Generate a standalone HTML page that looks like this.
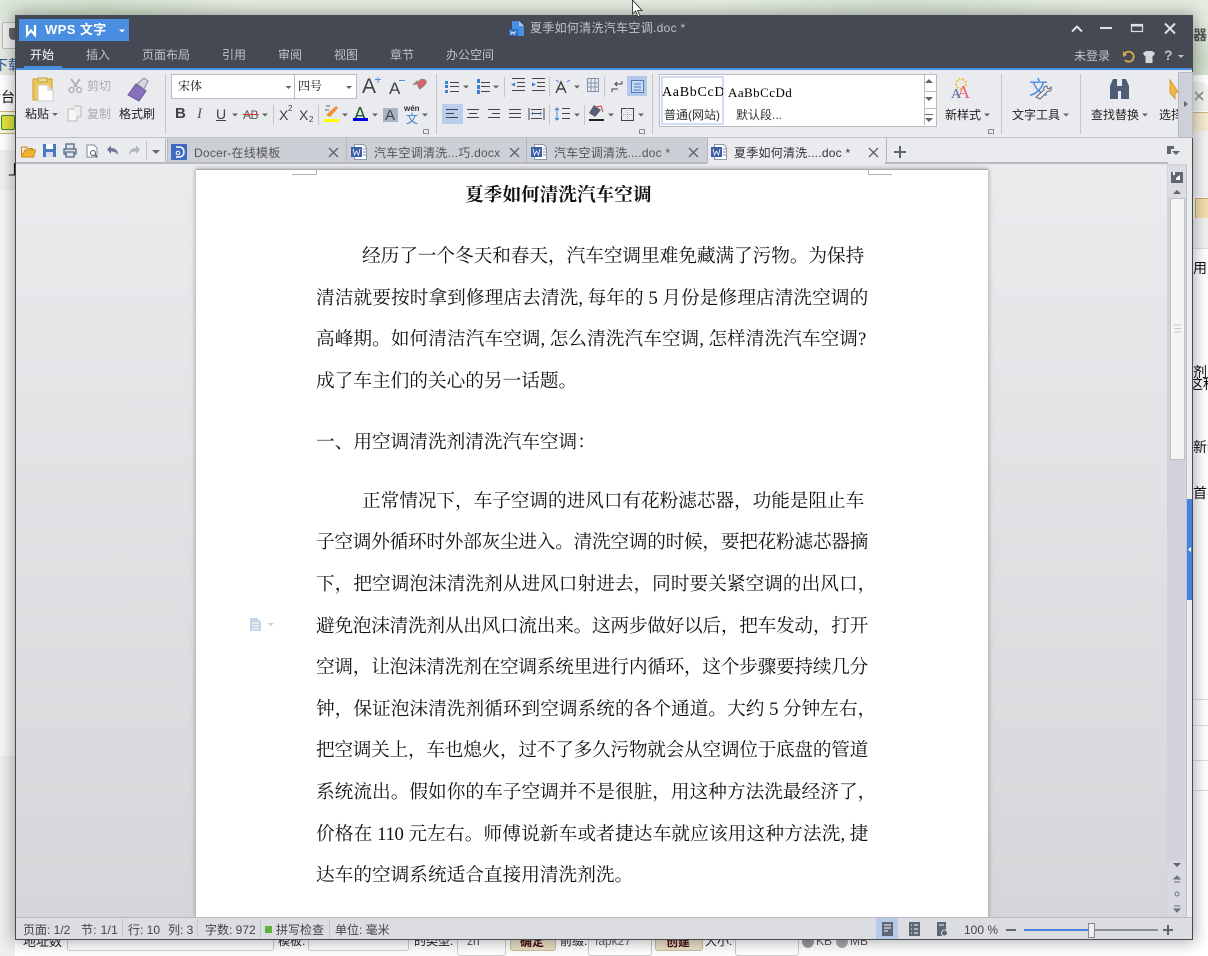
<!DOCTYPE html>
<html><head><meta charset="utf-8"><style>
html,body{margin:0;padding:0;width:1208px;height:956px;overflow:hidden;background:#fff}
body{position:relative;font-family:"Liberation Sans","Noto Sans CJK SC",sans-serif;font-size:12px;color:#333}
div,span{position:absolute}
.t{white-space:nowrap;line-height:16px}
.d{color:#222}
.g{color:#aaa}
.m{color:#c0c3c8;font-size:12px}
.tb{font-size:12px;letter-spacing:.25px;color:#555}
.bg{color:#111;font-size:14px;overflow:hidden}
.l{font-family:"Liberation Serif","Noto Serif CJK SC",serif;font-size:18.67px;color:#111;line-height:26px;height:26px;white-space:nowrap;left:316px;width:552px;text-align:justify;text-align-last:justify;letter-spacing:-.3px}
.n{text-align-last:left;letter-spacing:0}
.s{background:#c4c6cb;width:1px}
</style></head><body>
<!-- background -->
<div style="left:0;top:0;width:1208px;height:75px;background:radial-gradient(ellipse 150px 30px at 100px 8px,#d0decb,transparent),radial-gradient(ellipse 200px 20px at 900px 5px,#d3e0d0,transparent),radial-gradient(ellipse 140px 40px at 1200px 60px,#cddbc8,transparent),#e4ece1"></div>
<div style="left:2px;top:22px;width:30px;height:25px;background:#f1f1f1;border:1px solid #bbb;border-radius:2px"></div>
<div style="left:9px;top:28px;width:9px;height:12px;background:#666;border-radius:2px 2px 6px 6px"></div>
<div class="t bg" style="left:-6px;top:57px;color:#2a5a9a">下载</div>
<div style="left:0;top:82px;width:1208px;height:28px;background:#fff"></div>
<div class="t bg" style="left:-13px;top:89px">后台</div>
<div style="left:0;top:111px;width:15px;height:21px;background:#fdf6dc;border:1px solid #c9b77c;border-left:0"></div>
<div style="left:1px;top:115px;width:12px;height:13px;background:#e2e23b;border:1px solid #3c8c3c;border-radius:2px"></div>
<div style="left:0;top:150px;width:15px;height:40px;background:#f1f1f1"></div>
<div class="t bg" style="left:8px;top:162px">上</div>
<div style="left:0;top:190px;width:15px;height:566px;background:#f7f7f7"></div>
<div style="left:0;top:756px;width:15px;height:200px;background:#eee"></div>
<div style="left:1193px;top:75px;width:15px;height:881px;background:#fff"></div>
<div style="left:1193px;top:82px;width:15px;height:29px;background:#f1f3ef;border-radius:0 8px 0 0"></div>
<div style="left:1193px;top:112px;width:15px;height:19px;background:#f6ecd2;border-top:1px solid #cdb67c;border-bottom:1px solid #cdb67c"></div>
<div style="left:1193px;top:131px;width:15px;height:66px;background:#f3f3f3"></div>
<div style="left:1195px;top:198px;width:13px;height:20px;background:#f2ddac;border:1px solid #c9a866"></div>
<div style="left:1193px;top:218px;width:15px;height:30px;background:#f1f1f1;border-bottom:1px solid #ddd"></div>
<div class="t bg" style="left:1193px;top:260px;width:15px">用的</div>
<div class="t bg" style="left:1193px;top:364px;width:15px">剂从</div>
<div class="t bg" style="left:1189px;top:376px;width:19px">这种</div>
<div class="t bg" style="left:1193px;top:439px;width:15px">新装</div>
<div class="t bg" style="left:1193px;top:485px;width:15px">首办</div>
<div class="t bg" style="left:1193px;top:27px;color:#555;width:15px;font-weight:bold">器</div>
<div style="left:1193px;top:699px;width:15px;height:1px;background:#ddd"></div>
<div style="left:1193px;top:725px;width:15px;height:1px;background:#ddd"></div>
<div style="left:1193px;top:760px;width:15px;height:1px;background:#ddd"></div>
<div style="left:1193px;top:790px;width:15px;height:1px;background:#ddd"></div>
<!-- bottom form -->
<div class="t" style="left:23px;top:934px;color:#222;font-size:13px">地址数</div>
<div style="left:67px;top:936px;width:205px;height:13px;border:1px solid #ccc;border-radius:3px;background:#fff"></div>
<div class="t" style="left:278px;top:933px;color:#222">模板:</div>
<div style="left:308px;top:936px;width:99px;height:13px;border:1px solid #ccc;border-radius:3px;background:#fff"></div>
<div class="t" style="left:414px;top:933px;color:#222">的类型:</div>
<div style="left:457px;top:936px;width:47px;height:18px;border:1px solid #ccc;border-radius:3px;background:#fff"></div>
<div class="t" style="left:467px;top:933px;color:#555">zh</div>
<div style="left:510px;top:936px;width:44px;height:13px;background:#eadfc6;border:1px solid #c9bd9d;border-radius:3px"></div>
<div class="t" style="left:520px;top:934px;color:#411;font-weight:bold">确定</div>
<div class="t" style="left:560px;top:933px;color:#222">前缀:</div>
<div style="left:588px;top:936px;width:62px;height:18px;border:1px solid #ccc;border-radius:3px;background:#fff"></div>
<div class="t" style="left:595px;top:933px;color:#666">fapk27</div>
<div style="left:655px;top:936px;width:46px;height:13px;background:#eadfc6;border:1px solid #c9bd9d;border-radius:3px"></div>
<div class="t" style="left:666px;top:934px;color:#411;font-weight:bold">创建</div>
<div class="t" style="left:705px;top:933px;color:#222">大小:</div>
<div style="left:735px;top:936px;width:62px;height:18px;border:1px solid #ccc;border-radius:3px;background:#fff"></div>
<div style="left:802px;top:934px;width:12px;height:14px;background:#999;border-radius:50%"></div>
<div class="t" style="left:816px;top:933px;color:#555">KB</div>
<div style="left:836px;top:934px;width:12px;height:14px;background:#aaa;border-radius:50%"></div>
<div class="t" style="left:850px;top:933px;color:#555">MB</div>

<!-- window -->
<div style="left:15px;top:15px;width:1178px;height:925px;background:#454953;box-shadow:0 0 14px 2px rgba(0,0,0,.32)"></div>
<div style="left:15px;top:15px;width:1178px;height:53px;background:#454953"></div>
<div style="left:16px;top:68px;width:1176px;height:2px;background:#4a8ede"></div>
<div style="left:16px;top:70px;width:1176px;height:68px;background:#e9ebee;border-bottom:1px solid #c0c2c7;box-sizing:border-box"></div>
<div style="left:16px;top:138px;width:1176px;height:25px;background:#e9ebee"></div>
<div style="left:16px;top:163px;width:1176px;height:754px;background:linear-gradient(#eaebed,#d5d6d9)"></div>
<div style="left:16px;top:917px;width:1176px;height:23px;box-sizing:border-box;background:#dcdde1;border-top:1px solid #b8bac0;border-bottom:1px solid #454953"></div>

<!-- logo -->
<div style="left:19px;top:19px;width:110px;height:22px;background:#4a8ee2"></div>
<div class="t" style="left:45px;top:22px;color:#fff;font-size:13px;font-weight:bold;letter-spacing:.4px">WPS 文字</div>
<!-- menu -->
<div class="t" style="left:30px;top:47px;color:#fff">开始</div>
<div style="left:24px;top:66px;width:38px;height:2px;background:#4a8ede"></div>
<div class="t m" style="left:86px;top:47px">插入</div>
<div class="t m" style="left:142px;top:47px">页面布局</div>
<div class="t m" style="left:222px;top:47px">引用</div>
<div class="t m" style="left:278px;top:47px">审阅</div>
<div class="t m" style="left:334px;top:47px">视图</div>
<div class="t m" style="left:390px;top:47px">章节</div>
<div class="t m" style="left:446px;top:47px">办公空间</div>
<div class="t m" style="left:530px;top:20px;letter-spacing:.3px">夏季如何清洗汽车空调.doc *</div>
<div class="t m" style="left:1074px;top:48px">未登录</div>
<div class="t m" style="left:1164px;top:47px;font-size:14px;font-weight:bold">?</div>

<!-- ribbon text -->
<div class="t d" style="left:25px;top:106px">粘贴</div>
<div class="t g" style="left:87px;top:78px">剪切</div>
<div class="t g" style="left:87px;top:106px">复制</div>
<div class="t d" style="left:119px;top:106px">格式刷</div>
<div style="left:171px;top:74px;width:184px;height:23px;background:#fff;border:1px solid #b9bbc0"></div>
<div style="left:294px;top:75px;width:1px;height:23px;background:#b9bbc0"></div>
<div class="t" style="left:178px;top:78px;color:#111;font-family:'Liberation Serif','Noto Serif CJK SC',serif">宋体</div>
<div class="t" style="left:298px;top:78px;color:#111;font-family:'Liberation Serif','Noto Serif CJK SC',serif">四号</div>
<div class="t" style="left:175px;top:105px;font:bold 15px/18px 'Liberation Sans';color:#444">B</div>
<div class="t" style="left:197px;top:105px;font:italic 15px/18px 'Liberation Serif';color:#555">I</div>
<div class="t" style="left:216px;top:105px;font:14px/18px 'Liberation Sans';color:#444;text-decoration:underline">U</div>
<div class="t" style="left:243px;top:107px;font:12px/16px 'Liberation Sans';color:#555;letter-spacing:-.5px">AB</div>
<div style="left:243px;top:114px;width:16px;height:1px;background:#d33"></div>
<div class="t" style="left:279px;top:106px;font:14px/18px 'Liberation Sans';color:#444">X</div>
<div class="t" style="left:288px;top:104px;font:8px/10px 'Liberation Sans';color:#444">2</div>
<div class="t" style="left:299px;top:106px;font:14px/18px 'Liberation Sans';color:#444">X</div>
<div class="t" style="left:309px;top:115px;font:8px/10px 'Liberation Sans';color:#444">2</div>
<div class="t" style="left:354px;top:104px;font:18px/20px 'Liberation Sans';color:#2a5a2a">A</div>
<div style="left:383px;top:108px;width:15px;height:14px;background:#a9b3c4"></div>
<div class="t" style="left:385px;top:108px;font:15px/15px 'Liberation Sans';color:#444">A</div>
<div class="t" style="left:404px;top:104px;font:bold 8px/9px 'Liberation Sans';color:#333">wén</div>
<div class="t" style="left:406px;top:111px;font-size:12px;color:#3f7fd0">文</div>
<div class="t" style="left:362px;top:76px;font:21px/22px 'Liberation Sans';color:#444">A</div>
<div class="t" style="left:389px;top:80px;font:17px/18px 'Liberation Sans';color:#444">A</div>

<!-- style gallery -->
<div style="left:659px;top:74px;width:276px;height:51px;background:#fff;border:1px solid #b9bbc0"></div>
<div style="left:661px;top:76px;width:59px;height:45px;border:2px solid #cfdcf2"></div>
<div class="t" style="left:662px;top:84px;width:61px;overflow:hidden;font:14px/18px 'Liberation Serif',serif;letter-spacing:.7px;color:#000">AaBbCcDd</div>
<div class="t" style="left:728px;top:84px;font:13px/18px 'Liberation Serif',serif;letter-spacing:.45px;color:#000">AaBbCcDd</div>
<div class="t" style="left:664px;top:107px;color:#333">普通(网站)</div>
<div class="t" style="left:736px;top:107px;color:#333">默认段...</div>
<div style="left:924px;top:75px;width:1px;height:50px;background:#b9bbc0"></div>
<div style="left:925px;top:91px;width:11px;height:1px;background:#b9bbc0"></div>
<div style="left:925px;top:108px;width:11px;height:1px;background:#b9bbc0"></div>
<div class="t d" style="left:945px;top:107px">新样式</div>
<div class="t d" style="left:1012px;top:107px">文字工具</div>
<div class="t d" style="left:1091px;top:107px">查找替换</div>
<div class="t d" style="left:1159px;top:107px;width:20px;overflow:hidden">选择</div>
<!-- separators -->
<div class="s" style="left:165px;top:74px;height:60px"></div>
<div class="s" style="left:273px;top:105px;height:20px"></div>
<div class="s" style="left:318px;top:105px;height:20px"></div>
<div class="s" style="left:436px;top:74px;height:60px"></div>
<div class="s" style="left:504px;top:77px;height:20px"></div>
<div class="s" style="left:549px;top:77px;height:20px"></div>
<div class="s" style="left:604px;top:77px;height:20px"></div>
<div class="s" style="left:549px;top:105px;height:20px"></div>
<div class="s" style="left:584px;top:105px;height:20px"></div>
<div class="s" style="left:652px;top:74px;height:60px"></div>
<div class="s" style="left:1001px;top:74px;height:60px"></div>
<div class="s" style="left:1080px;top:74px;height:60px"></div>
<div style="left:627px;top:76px;width:20px;height:20px;background:#b3c8ea"></div>
<div style="left:442px;top:104px;width:21px;height:20px;background:#b9cdec"></div>
<div style="left:1178px;top:72px;width:13px;height:64px;background:#cdd0d8;border:1px solid #b9bbc0"></div>

<!-- tabs -->
<div style="left:167px;top:138px;width:178px;height:24px;background:#cdcfd6;border-left:1px solid #b5b7bd"></div>
<div style="left:346px;top:138px;width:179px;height:24px;background:#cdcfd6;border-left:1px solid #b5b7bd"></div>
<div style="left:526px;top:138px;width:180px;height:24px;background:#cdcfd6;border-left:1px solid #b5b7bd"></div>
<div style="left:707px;top:138px;width:178px;height:25px;background:#e9ebee;border-left:1px solid #b5b7bd;border-right:1px solid #b5b7bd"></div>
<div style="left:16px;top:162px;width:691px;height:2px;background:#b9bbc1"></div>
<div style="left:885px;top:162px;width:283px;height:2px;background:#b9bbc1"></div>
<div class="t tb" style="left:194px;top:145px">Docer-在线模板</div>
<div class="t tb" style="left:374px;top:145px">汽车空调清洗...巧.docx</div>
<div class="t tb" style="left:554px;top:145px">汽车空调清洗....doc *</div>
<div class="t tb" style="left:734px;top:145px;color:#333">夏季如何清洗....doc *</div>

<!-- page -->
<div style="left:196px;top:169px;width:792px;height:749px;background:#fff;box-shadow:0 0 5px rgba(0,0,0,.35);border-top:1px solid #aaa"></div>
<div style="left:292px;top:174px;width:24px;height:1px;background:#b5b5b5"></div>
<div style="left:316px;top:170px;width:1px;height:5px;background:#b5b5b5"></div>
<div style="left:868px;top:174px;width:24px;height:1px;background:#b5b5b5"></div>
<div style="left:868px;top:170px;width:1px;height:5px;background:#b5b5b5"></div>
<div style="left:16px;top:917px;width:1176px;height:23px;box-sizing:border-box;background:#dcdde1;border-top:1px solid #b8bac0;border-bottom:1px solid #454953"></div>
<div class="l n" style="left:465px;top:183px;font-weight:bold;width:auto">夏季如何清洗汽车空调</div>
<div class="l" style="left:362px;width:502px;top:244px">经历了一个冬天和春天&#xFF0C;汽车空调里难免藏满了污物。为保持</div>
<div class="l" style="top:286px">清洁就要按时拿到修理店去清洗, 每年的 5 月份是修理店清洗空调的</div>
<div class="l" style="top:327px;width:550px">高峰期。如何清洁汽车空调, 怎么清洗汽车空调, 怎样清洗汽车空调?</div>
<div class="l n" style="top:369px">成了车主们的关心的另一话题。</div>
<div class="l n" style="top:430px">一、用空调清洗剂清洗汽车空调&#xFF1A;</div>
<div class="l" style="left:362px;width:502px;top:489px">正常情况下&#xFF0C;车子空调的进风口有花粉滤芯器&#xFF0C;功能是阻止车</div>
<div class="l" style="top:530px">子空调外循环时外部灰尘进入。清洗空调的时候&#xFF0C;要把花粉滤芯器摘</div>
<div class="l" style="top:572px;width:560px">下&#xFF0C;把空调泡沫清洗剂从进风口射进去&#xFF0C;同时要关紧空调的出风口&#xFF0C;</div>
<div class="l" style="top:614px">避免泡沫清洗剂从出风口流出来。这两步做好以后&#xFF0C;把车发动&#xFF0C;打开</div>
<div class="l" style="top:655px">空调&#xFF0C;让泡沫清洗剂在空调系统里进行内循环&#xFF0C;这个步骤要持续几分</div>
<div class="l" style="top:697px;width:560px">钟&#xFF0C;保证泡沫清洗剂循环到空调系统的各个通道。大约 5 分钟左右&#xFF0C;</div>
<div class="l" style="top:738px">把空调关上&#xFF0C;车也熄火&#xFF0C;过不了多久污物就会从空调位于底盘的管道</div>
<div class="l" style="top:780px;width:560px">系统流出。假如你的车子空调并不是很脏&#xFF0C;用这种方法洗最经济了&#xFF0C;</div>
<div class="l" style="top:822px">价格在 110 元左右。师傅说新车或者捷达车就应该用这种方法洗, 捷</div>
<div class="l n" style="top:863px">达车的空调系统适合直接用清洗剂洗。</div>

<!-- scrollbars -->
<div style="left:1167px;top:164px;width:19px;height:753px;background:#d2d3da;border-right:1px solid #c0c2c7"></div>
<div style="left:1187px;top:139px;width:5px;height:778px;background:#ebecee"></div>
<div style="left:1187px;top:499px;width:5px;height:101px;background:#4282e2"></div>
<div style="left:1168px;top:166px;width:18px;height:32px;background:#dcdde2"></div>
<div style="left:1170px;top:198px;width:13px;height:260px;background:#f5f5f6;border:1px solid #c0c2c6"></div>
<div style="left:1168px;top:860px;width:18px;height:57px;background:#d8d9e0"></div>

<!-- status -->
<div class="t" style="left:23px;top:922px;color:#444">页面: 1/2</div>
<div class="t" style="left:81px;top:922px;color:#444;letter-spacing:.3px">节: 1/1</div>
<div class="s" style="left:122px;top:919px;height:19px"></div>
<div class="t" style="left:128px;top:922px;color:#444">行: 10</div>
<div class="t" style="left:168px;top:922px;color:#444">列: 3</div>
<div class="s" style="left:197px;top:919px;height:19px"></div>
<div class="t" style="left:205px;top:922px;color:#444">字数: 972</div>
<div class="s" style="left:260px;top:919px;height:19px"></div>
<div style="left:265px;top:926px;width:7px;height:7px;background:#5db33a"></div>
<div class="t" style="left:276px;top:922px;color:#444">拼写检查</div>
<div class="s" style="left:329px;top:919px;height:19px"></div>
<div class="t" style="left:335px;top:922px;color:#444">单位: 毫米</div>
<div style="left:876px;top:918px;width:22px;height:21px;background:#b6c9e8"></div>
<div class="t" style="left:964px;top:922px;color:#444">100 %</div>
<div style="left:1024px;top:929px;width:134px;height:2px;background:#8a8d94"></div>
<div style="left:1024px;top:929px;width:65px;height:2px;background:#4a80dc"></div>
<div style="left:1088px;top:923px;width:5px;height:13px;background:#eee;border:1px solid #888"></div>

<!-- icons -->
<svg width="1208" height="956" viewBox="0 0 1208 956" style="position:absolute;left:0;top:0" fill="none">
<!-- bg x -->
<path d="M1195 92l8 8M1203 92l-8 8" stroke="#888" stroke-width="1.800"/>
<!-- logo icon -->
<path d="M27 25V35L31 30.500L35 35V25" stroke="#fff" stroke-width="2.200"/>
<path d="M119 29.500h6l-3 3z" fill="#fff"/>
<!-- title doc icon -->
<path d="M512 21h7l5 5v10h-12z" fill="#4a8ee2"/><path d="M519 21l5 5h-5z" fill="#a9c9f0"/>
<rect x="509" y="29" width="9" height="7" fill="#2f6fc6"/><path d="M510.500 31l1 3 1.500-2 1.500 2 1-3" stroke="#fff" stroke-width=".8"/>
<!-- win controls -->
<path d="M1072 31.500l5-5 5 5" stroke="#dfe0e3" stroke-width="2"/>
<path d="M1100 28h12" stroke="#dfe0e3" stroke-width="2"/>
<rect x="1131.500" y="24.500" width="11" height="7" stroke="#dfe0e3" stroke-width="1.200"/><path d="M1131 25.500h12" stroke="#dfe0e3" stroke-width="2"/>
<path d="M1165 23.500l10 10M1175 23.500l-10 10" stroke="#dfe0e3" stroke-width="2"/>
<!-- user icons -->
<path d="M1124 55a5 5 0 1 1 1 5" stroke="#d5a94a" stroke-width="1.800"/><path d="M1123 51l4 4-4 2z" fill="#d5a94a"/>
<path d="M1143 53l3-2h6l3 2-1.500 3-1-.500V63h-7v-7.500l-1 .500z" fill="#d5d7da"/>
<path d="M1178 55h6l-3 3z" fill="#c0c3c8"/>
<!-- paste -->
<path d="M33 79h19v21H33z" fill="#f0c75a" stroke="#c9a030"/><rect x="38" y="78" width="9" height="4" fill="#e8d9a0" stroke="#c9a030"/>
<path d="M38 85h9l6 6v10H38z" fill="#fff" stroke="#c9c9c9"/><path d="M47 85v6h6z" fill="#ddd"/>
<path d="M52 113h6l-3 3z" fill="#666"/>
<!-- scissors -->
<path d="M71 79l6 8M80 79l-6 8" stroke="#aaa" stroke-width="1.500"/><circle cx="71.500" cy="90" r="2.500" stroke="#aaa" stroke-width="1.200"/><circle cx="79" cy="90" r="2.500" stroke="#aaa" stroke-width="1.200"/>
<!-- copy -->
<path d="M68 109h9v12h-9z" fill="#f6f6f6" stroke="#bbb"/><path d="M74 106h7v11h-4" fill="#eee" stroke="#bbb"/>
<!-- brush -->
<path d="M128 95l8-11 10 7-7 10z" fill="#8a6fbe" stroke="#6a5a96"/><path d="M137 84l7-6 4 3-4 8z" fill="#dad6e6" stroke="#8a8a9a"/>
<!-- dropdowns -->
<path d="M285.500 86h6l-3 3zM346 86h6l-3 3zM232 113.500h6l-3 3zM262 113.500h6l-3 3zM342 113.500h6l-3 3zM372 113.500h6l-3 3zM422 113.500h6l-3 3zM463 85.500h6l-3 3zM493 85.500h6l-3 3zM574 85.500h6l-3 3zM574 113.500h6l-3 3zM608 113.500h6l-3 3zM638 113.500h6l-3 3zM984 113.500h6l-3 3zM1063 113.500h6l-3 3zM1142 113.500h6l-3 3zM925 83h8l-4-4zM925 97h8l-4 4zM925 118h8l-4 4z" fill="#666"/>
<path d="M925 114.500h8" stroke="#666"/>
<!-- A+ A- -->
<path d="M375 79.500h6M378 77v6" stroke="#4a8ee2"/><path d="M399 80.500h6" stroke="#4a8ee2"/>
<!-- clear -->
<path d="M413 85l4-4 2 3M420 80c2-1 5-1 6 1 1 2-1 4-6 8-3-3-3-6 0-9z" stroke="#888" fill="#e0606a"/>
<!-- highlight -->
<path d="M326 115l10-9 2 2-8 9z" fill="#f09030"/><path d="M324 119h15v3h-15z" fill="#ff0"/><path d="M326 106h4M325 110h4" stroke="#666"/>
<rect x="353" y="118" width="15" height="3" fill="#0000e0"/>
<!-- lists -->
<g stroke="#444"><path d="M450 82.500h9M450 86.500h9M450 91.500h9M481 82.500h9M481 86.500h9M481 91.500h9"/>
<path d="M512 78.500h13M517 82.500h8M517 86.500h8M512 90.500h13M532 78.500h13M537 82.500h8M537 86.500h8M532 90.500h13"/></g>
<g fill="#3f7fd0"><rect x="445" y="81" width="3" height="3"/><rect x="445" y="85" width="3" height="3"/><rect x="445" y="90" width="3" height="3"/><rect x="477" y="79" width="3" height="4"/><rect x="477" y="85" width="3" height="4"/><rect x="477" y="90" width="3" height="4"/><path d="M511 84.500l4-2v4zM536 84.500l-4-2v4z"/></g>
<path d="M556 93l5-11 5 11M558 89h7" stroke="#444" stroke-width="1.500"/><path d="M556 80l3 2M570 80l-3 2" stroke="#3f7fd0"/>
<path d="M587.500 78.500h11v13h-11zM587.500 83h11M587.500 87h11M591 78.500v13M595 78.500v13" stroke="#7f93b5"/>
<path d="M622 81v3h-7M617 82l-2 2 2 2M612 92v-3h6" stroke="#444"/>
<rect x="631.500" y="80.500" width="12" height="12" stroke="#4a7cbc" fill="#fff" fill-opacity=".3"/><path d="M634 84h7M634 87h7M634 90h7" stroke="#4a7cbc"/>
<!-- align -->
<g stroke="#444"><path d="M446 109.500h12M446 113.500h8M446 117.500h12M467 109.500h12M469 113.500h8M467 117.500h12M488 109.500h12M492 113.500h8M488 117.500h12M509 109.500h12M509 113.500h12M509 117.500h12M529 108v12M544 108v12M531 109.500h11M531 118.500h11M533 113.500h7"/></g>
<path d="M531 113.500l2-2v4zM542 113.500l-2-2v4z" fill="#3f7fd0"/>
<path d="M562 108.500h8M562 113.500h8M562 118.500h8" stroke="#444"/><path d="M557 108v12M555 110l2-2 2 2M555 118l2 2 2-2" stroke="#3f7fd0"/>
<path d="M594 105l7 5-6 7-6-4z" fill="#556070"/><path d="M596 107l5-1 2 6" stroke="#d44" /><rect x="589" y="119" width="15" height="2" fill="#222"/>
<path d="M621.500 108.500h12v12h-12z" stroke="#444"/><path d="M627.500 108v12M621 114.500h12" stroke="#aaa" stroke-dasharray="1 1"/>
<!-- launchers -->
<path d="M423.500 129.500h5v5M423.500 129.500v4h4" stroke="#888"/><path d="M639.500 129.500h5v5M639.500 129.500v4h4" stroke="#888"/><path d="M988.500 129.500h5v5M988.500 129.500v4h4" stroke="#888"/>
<!-- new style -->
<circle cx="961" cy="84" r="5" stroke="#f4c030" stroke-width="2" stroke-dasharray="2 1.500"/>
<text x="957" y="98" font-family="Liberation Serif" font-size="18" fill="#e8607a">A</text><text x="951" y="98" font-family="Liberation Serif" font-size="14" fill="#4a6a9a">A</text>
<!-- text tool -->
<text x="1029" y="94" font-family="Noto Sans CJK SC" font-size="19" fill="#4a8ee2">文</text>
<path d="M1040 99l8-8c2 1 4-1 3-4l-2 2-2-1 0-2c-3 0-4 2-3 4l-8 7z" stroke="#667" fill="#eee"/>
<!-- binoc -->
<path d="M1110 99V86l3-7h4v7h5v-7h4l3 7v13h-8v-8h-3v8z" fill="#4f5d77"/>
<!-- select arrow -->
<path d="M1170 80l8 12-3 .500 0 6-5-6z" fill="#f5b942" stroke="#d6952a"/>
<path d="M1184 101l4 3-4 3z" fill="#5a6a88"/>
<!-- qat -->
<path d="M21.500 147v10h12l2-7H25l-2 5M21.500 147h5l1 1.500h5v1.500" fill="#f3b52c" stroke="#c9881c"/>
<rect x="43" y="144" width="13" height="13" fill="#4a78c2"/><rect x="46" y="144" width="7" height="5" fill="#fff"/><rect x="46" y="152" width="7" height="5" fill="#dde"/>
<path d="M66 149v-5h8v5M66 154h-2v-5h12v5h-2M66 152h8v5h-8z" stroke="#4f6484" stroke-width="1.300" fill="#dfe3ea"/>
<path d="M87 145h7l3 3v9H87z" fill="#fff" stroke="#7d8798"/><circle cx="93" cy="153" r="2.500" stroke="#556"/><path d="M95 155l2 2" stroke="#556" stroke-width="1.300"/>
<path d="M107 149.500l4-4v2.500c4 0 7 2 7 7-2-3-4-3.500-7-3.500v2.500z" fill="#6a7a96"/>
<path d="M140 149.500l-4-4v2.500c-4 0-7 2-7 7 2-3 4-3.500 7-3.500v2.500z" fill="#b0b5be"/>
<path d="M146.500 141v19" stroke="#c0c2c7"/><path d="M152 150h8l-4 4z" fill="#666"/>
<path d="M165.500 139v23" stroke="#b5b7bd"/>
<!-- tab icons -->
<rect x="171" y="144" width="16" height="16" fill="#3f6cc0"/><path d="M176 147h3c4 0 5 3 5 5 0 3-2 5-5 5h-3" stroke="#fff" stroke-width="1.500"/><circle cx="178" cy="153" r="1.800" stroke="#fff"/>
<g><path d="M354.500 144.500h9l3 3v12h-12z" fill="#fff" stroke="#8a96ae"/><rect x="351" y="147" width="11" height="10" fill="#3d5fa8"/><path d="M353 149l1.500 6 2-4 2 4 1.500-6" stroke="#fff" stroke-width=".8"/><path d="M363 149h3M363 152h3M363 155h3" stroke="#889"/></g>
<g transform="translate(180 0)"><path d="M354.500 144.500h9l3 3v12h-12z" fill="#fff" stroke="#8a96ae"/><rect x="351" y="147" width="11" height="10" fill="#3d5fa8"/><path d="M353 149l1.500 6 2-4 2 4 1.500-6" stroke="#fff" stroke-width=".8"/><path d="M363 149h3M363 152h3M363 155h3" stroke="#889"/></g>
<g transform="translate(360 0)"><path d="M354.500 144.500h9l3 3v12h-12z" fill="#fff" stroke="#8a96ae"/><rect x="351" y="147" width="11" height="10" fill="#3d5fa8"/><path d="M353 149l1.500 6 2-4 2 4 1.500-6" stroke="#fff" stroke-width=".8"/><path d="M363 149h3M363 152h3M363 155h3" stroke="#889"/></g>
<path d="M329 148l9 9M338 148l-9 9M510 148l9 9M519 148l-9 9M689 148l9 9M698 148l-9 9M869 148l9 9M878 148l-9 9" stroke="#5c6068" stroke-width="1.300"/>
<path d="M894 152h12M900 146v12" stroke="#5a6470" stroke-width="2"/>
<path d="M1167 146h7v3h-3v5h-4z" fill="#5f6670"/><path d="M1172 151h8l-4 4z" fill="#5f6670"/>
<!-- side icon -->
<path d="M250 618h7l4 4v9h-11z" fill="#c3d2e8"/><path d="M252 623h7M252 626h7M252 629h7" stroke="#fff"/>
<path d="M268 623h6l-3 3z" fill="#ccc"/>
<!-- scrollbar icons -->
<rect x="1171" y="172" width="12" height="11" fill="#5f6670"/><path d="M1176 178l4-3v5h-4z" fill="#fff"/><rect x="1173" y="172" width="2" height="3" fill="#fff"/>
<path d="M1173 194l4-4 4 4z" fill="#5f6670"/>
<path d="M1173 868l4 4 4-4z" fill="#5f6670" transform="translate(0 -5)"/>
<path d="M1174 325h7M1174 328.500h7M1174 332h7" stroke="#c8c8c8"/>
<path d="M1174 879l3-3 3 3zM1174 882h6" stroke="#6a7080" fill="#6a7080"/>
<circle cx="1177" cy="894" r="2" stroke="#6a7080"/>
<path d="M1174 906h6M1174 909l3 3 3-3z" stroke="#6a7080" fill="#6a7080"/>
<path d="M1191 547l-3 2.500 3 2.500z" fill="#fff"/>
<!-- status icons -->
<rect x="882" y="922" width="11" height="14" fill="#5d6674"/><path d="M884 925h7M884 928h7M884 931h4" stroke="#fff"/>
<rect x="909" y="922" width="11" height="14" fill="#5d6674"/><path d="M911 925h1M914 925h4M911 929h1M914 929h4M911 933h1M914 933h4" stroke="#fff"/>
<path d="M937 922h9v8h-3v6h-6z" fill="#5d6674"/><path d="M939 925h5" stroke="#fff"/><circle cx="944.500" cy="933" r="3" fill="#5d6674" stroke="#dcdde1"/>
<path d="M1006 930h10" stroke="#5d6674" stroke-width="2"/>
<path d="M1163 930h10M1168 925v10" stroke="#5d6674" stroke-width="2"/>
<!-- cursor -->
<path d="M632.500 0v14l3-3 2.500 6 2-1-2.500-5.500h4.500L632.500 0z" fill="#fff" stroke="#222" stroke-width=".8"/>
</svg>
</body></html>
